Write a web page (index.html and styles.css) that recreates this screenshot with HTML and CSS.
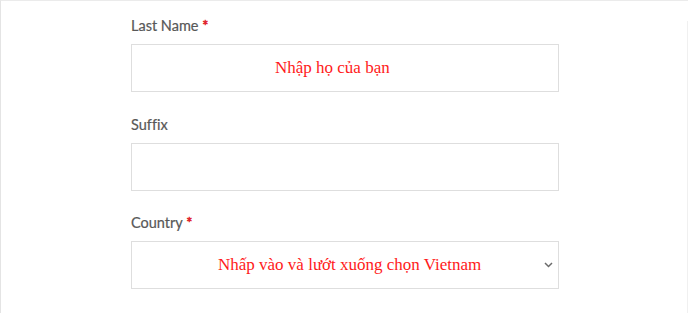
FILE: index.html
```html
<!DOCTYPE html>
<html lang="vi">
<head>
<meta charset="utf-8">
<title>Form</title>
<link rel="stylesheet" href="styles.css">
</head>
<body>
<div class="frame">
  <main class="form">
    <div class="field">
      <label class="label">Last Name <span class="req">*</span></label>
      <div class="box"><span class="note note-name">Nhập họ của bạn</span></div>
    </div>
    <div class="field">
      <label class="label">Suffix</label>
      <div class="box"></div>
    </div>
    <div class="field">
      <label class="label">Country <span class="req">*</span></label>
      <div class="box select">
        <span class="note note-country">Nhấp vào và lướt xuống chọn Vietnam</span>
        <svg class="chev" width="9" height="6" viewBox="0 0 9 6"><path d="M1 1 L4.5 4.5 L8 1" fill="none" stroke="#6b6b6b" stroke-width="1.5"/></svg>
      </div>
    </div>
  </main>
  <div class="edge"></div>
</div>
</body>
</html>
```

FILE: styles.css
```css
html, body {
  margin: 0;
  padding: 0;
  background: #fff;
}
.frame {
  display: grid;
  grid-template-columns: 1fr 1px;
  height: 313px;
  box-sizing: border-box;
  border-top: 1px solid #ebebeb;
  border-left: 1px solid #e4e4e4;
  overflow: hidden;
}
.edge {
  margin-top: 20px;
  background: #f0f0f0;
}
.form {
  padding-left: 130px;
  padding-top: 15px;
}
.field {
  width: 428px;
  margin-bottom: 22.5px;
}
.label {
  display: block;
  font-family: Lato, "Open Sans", sans-serif;
  font-size: 14.5px;
  line-height: 20px;
  color: #585858;
  -webkit-text-stroke: 0.2px #585858;
  font-variant-ligatures: none;
  margin-bottom: 8px;
}
.req {
  color: #e0222b;
  -webkit-text-stroke: 0.5px #e0222b;
}
.box {
  height: 48px;
  box-sizing: border-box;
  border: 1px solid #dedede;
  display: flex;
  align-items: center;
}
.note {
  font-family: "Liberation Serif", "Times New Roman", serif;
  font-size: 17px;
  color: #ff1a1a;
  white-space: nowrap;
}
.note-name {
  padding-left: 143px;
}
.note-country {
  padding-left: 86px;
  flex: 1;
}
.chev {
  margin-right: 5px;
}
```
